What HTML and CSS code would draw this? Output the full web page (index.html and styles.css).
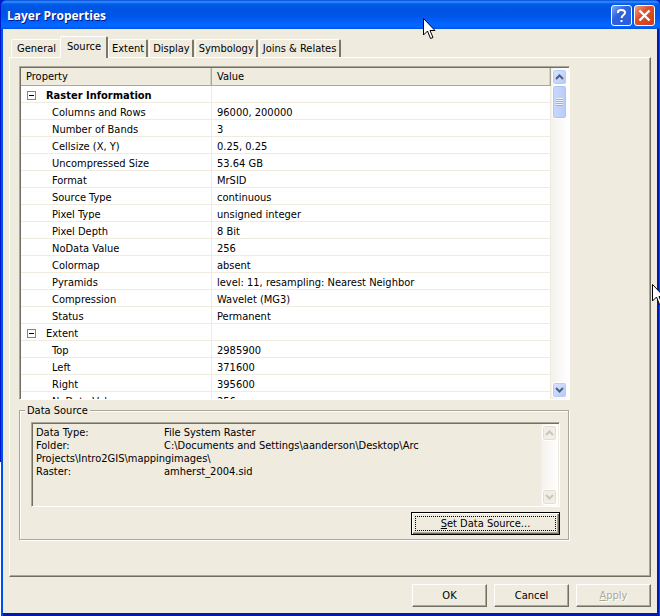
FILE: index.html
```html
<!DOCTYPE html>
<html lang="en">
<head>
    <meta charset="UTF-8">
    <meta name="viewport" content="width=device-width, initial-scale=1.0">
    <title>Layer Properties</title>
    <link rel="stylesheet" href="styles.css">
</head>
<body>
    <div class="window">
        <header class="titlebar">
            <h1>Layer Properties</h1>
            <button type="button" class="title-btn help" aria-label="Help">
                <svg width="13" height="15" viewBox="0 0 13 15"><path d="M3 5V4Q3 2 6.500 2T10 4.500Q10 6 8.500 7T6.500 10M6.500 12V14" fill="none" stroke="#fff" stroke-width="2"/></svg>
            </button>
            <button type="button" class="title-btn close" aria-label="Close">
                <svg width="13" height="13" viewBox="0 0 13 13"><path d="M1.500 1.500L11.500 11.500M11.500 1.500L1.500 11.500" stroke="#fff" stroke-width="2.400"/></svg>
            </button>
        </header>
        <main class="content">
            <div class="tabs" role="tablist">
                <button type="button" class="tab" role="tab">General</button>
                <button type="button" class="tab active" role="tab" aria-selected="true">Source</button>
                <button type="button" class="tab" role="tab">Extent</button>
                <button type="button" class="tab" role="tab">Display</button>
                <button type="button" class="tab" role="tab">Symbology</button>
                <button type="button" class="tab" role="tab">Joins &amp; Relates</button>
            </div>
            <div class="panel">
                <div class="list sunken">
                    <div class="list-view">
                        <table class="props">
                            <thead>
                                <tr><th class="name">Property</th><th>Value</th></tr>
                            </thead>
                            <tbody>
                                <tr class="group main"><td><button type="button" class="toggle" aria-label="Collapse Raster Information"></button>Raster Information</td><td></td></tr>
                                <tr><td>Columns and Rows</td><td>96000, 200000</td></tr>
                                <tr><td>Number of Bands</td><td>3</td></tr>
                                <tr><td>Cellsize (X, Y)</td><td>0.25, 0.25</td></tr>
                                <tr><td>Uncompressed Size</td><td>53.64 GB</td></tr>
                                <tr><td>Format</td><td>MrSID</td></tr>
                                <tr><td>Source Type</td><td>continuous</td></tr>
                                <tr><td>Pixel Type</td><td>unsigned integer</td></tr>
                                <tr><td>Pixel Depth</td><td>8 Bit</td></tr>
                                <tr><td>NoData Value</td><td>256</td></tr>
                                <tr><td>Colormap</td><td>absent</td></tr>
                                <tr><td>Pyramids</td><td>level: 11, resampling: Nearest Neighbor</td></tr>
                                <tr><td>Compression</td><td>Wavelet (MG3)</td></tr>
                                <tr><td>Status</td><td>Permanent</td></tr>
                                <tr class="group"><td><button type="button" class="toggle" aria-label="Collapse Extent"></button>Extent</td><td></td></tr>
                                <tr><td>Top</td><td>2985900</td></tr>
                                <tr><td>Left</td><td>371600</td></tr>
                                <tr><td>Right</td><td>395600</td></tr>
                                <tr><td>NoData Value</td><td>256</td></tr>
                            </tbody>
                        </table>
                    </div>
                    <div class="scrollbar">
                        <button type="button" class="scroll-btn" aria-label="Scroll up"><svg width="9" height="6" viewBox="0 0 9 6"><path d="M1 5L4.500 1.500L8 5"/></svg></button>
                        <div class="thumb"><span></span></div>
                        <button type="button" class="scroll-btn down" aria-label="Scroll down"><svg width="9" height="6" viewBox="0 0 9 6"><path d="M1 1L4.500 4.500L8 1"/></svg></button>
                    </div>
                </div>
                <fieldset class="source">
                    <legend><label for="sourceInfo">Data Source</label></legend>
                    <div class="source-box sunken">
                        <textarea id="sourceInfo" readonly>Data Type:&#9;File System Raster
Folder:&#9;C:\Documents and Settings\aanderson\Desktop\Arc
Projects\Intro2GIS\mappingimages\
Raster:&#9;amherst_2004.sid</textarea>
                        <div class="scrollbar off">
                            <button type="button" class="scroll-btn" disabled aria-label="Scroll up"><svg width="9" height="6" viewBox="0 0 9 6"><path d="M1 5L4.500 1.500L8 5"/></svg></button>
                            <button type="button" class="scroll-btn down" disabled aria-label="Scroll down"><svg width="9" height="6" viewBox="0 0 9 6"><path d="M1 1L4.500 4.500L8 1"/></svg></button>
                        </div>
                    </div>
                    <button type="button" class="btn default"><span><u>S</u>et Data Source...</span></button>
                </fieldset>
            </div>
            <div class="buttons">
                <button type="button" class="btn">OK</button>
                <button type="button" class="btn">Cancel</button>
                <button type="button" class="btn" disabled><u>A</u>pply</button>
            </div>
        </main>
    </div>

    <!-- mouse pointers -->
    <svg class="cursor one" width="13" height="22" viewBox="0 0 13 22"><path d="M.5 .5V17L4.500 13L7.500 20.500L10 19.500L7 12.500H12Z" fill="#fff" stroke="#000"/></svg>
    <svg class="cursor two" width="13" height="22" viewBox="0 0 13 22"><path d="M.5 .5V17L4.500 13L7.500 20.500L10 19.500L7 12.500H12Z" fill="#fff" stroke="#000"/></svg>
</body>
</html>
```
FILE: styles.css
```css
*{
    box-sizing: border-box;
}
body{
    margin: 0;
    padding-left: 1px;
    background: linear-gradient(#0019cf 75%, #fff 75%);
    font-family: "DejaVu Sans Condensed", Tahoma, sans-serif;
    font-size: 11px;
    line-height: 13px;
    color: #000;
    position: relative;
    overflow: hidden;
}
button, textarea{
    font: inherit;
    color: inherit;
    margin: 0;
    padding: 0;
}
.window{
    display: flex;
    flex-direction: column;
    height: 100vh;
    background-color: #0050e6;
    border-radius: 6px 6px 0 0;
    overflow: hidden;
}

/* title bar */
.titlebar{
    display: flex;
    align-items: center;
    gap: 2px;
    height: 29px;
    padding: 2px 5px 0 6px;
    background: linear-gradient(#0048d0 0, #3d95ff 2px, #0a6cf5 3px, #0058e6 5px, #0054e3 10px, #0055ea 16px, #0066ff 24px, #0066ff 27px, #0050dc 29px);
}
.titlebar h1{
    flex: 1;
    margin: 0;
    font-family: "Open Sans", "Trebuchet MS", sans-serif;
    font-size: 12px;
    font-weight: bold;
    color: #fff;
    text-shadow: 1px 1px 0 #0a1883;
}
.title-btn{
    display: flex;
    align-items: center;
    justify-content: center;
    width: 21px;
    height: 21px;
    border: 1px solid #fff;
    border-radius: 3px;
}
.help{
    background: linear-gradient(135deg, #7fa6f5, #2f62dc 40%, #2a5be0);
}
.close{
    background: linear-gradient(135deg, #f0a088, #e0502a 40%, #cc3d14);
}

/* dialog body */
.content{
    flex: 1;
    min-height: 0;
    display: flex;
    flex-direction: column;
    margin: 0 3px 0 2px;
    padding: 7px 6px 6px;
    background-color: #efebde;
    border-bottom: 3px solid #0019b0;
    box-shadow: 2px 0 0 #0019b0;
}
.tabs{
    display: flex;
    align-items: flex-end;
    height: 21px;
    padding-left: 2px;
    position: relative;
    z-index: 1;
}
.tab{
    height: 18px;
    padding: 0 2px 0 3px;
    margin-right: 1px;
    background-color: #efebde;
    border: 1px solid #fff;
    border-right: 2px solid #7b7869;
    border-bottom: 0;
    border-radius: 2px 2px 0 0;
    white-space: nowrap;
}
.tab:first-child{
    padding: 0 4px 0 5px;
    border-right: 0;
    margin-right: 0;
}
.tab:last-child{
    padding: 0 3px;
}
.tab.active{
    height: 22px;
    padding: 0 5px 3px 6px;
    margin-right: 0;
    margin-bottom: -1px;
}
.panel{
    flex: 1;
    min-height: 0;
    display: flex;
    flex-direction: column;
    padding: 8px 80px 35px 9px;
    border: 1px solid #fff;
    border-right-color: #716f64;
    border-bottom-color: #716f64;
    box-shadow: inset -1px -1px 0 #aca899;
}
.sunken{
    padding: 1px 1px 0;
    border: 1px solid #fff;
    border-top-color: #aca899;
    border-left-color: #aca899;
    box-shadow: inset 1px 1px 0 #716f64;
}

/* property list */
.list{
    flex: 1;
    min-height: 0;
    display: flex;
    background-color: #fff;
}
.list-view{
    flex: 1;
    overflow: hidden;
}
.props{
    width: 100%;
    table-layout: fixed;
    border-collapse: separate;
    border-spacing: 0;
    text-align: left;
}
.props th{
    height: 18px;
    padding: 0 5px;
    font-weight: normal;
    background-color: #efebde;
    border-right: 1px solid #aca899;
    border-bottom: 1px solid #aca899;
    box-shadow: inset -1px 0 0 #d6d2c2;
}
.props .name{
    width: 191px;
}
.props td{
    height: 17px;
    padding: 2px 5px 0;
    border-right: 1px solid #efebde;
    border-bottom: 1px solid #efebde;
    white-space: nowrap;
}
.props td:first-child{
    padding-left: 31px;
}
.props .group td:first-child{
    padding-left: 6px;
}
.props .main td{
    font-weight: bold;
}
.toggle{
    width: 9px;
    height: 9px;
    margin-right: 10px;
    border: 1px solid #848484;
    background: linear-gradient(#000, #000) center / 5px 1px no-repeat #fff;
}

/* scroll bars */
.scrollbar{
    display: flex;
    flex-direction: column;
    width: 17px;
    padding: 1px 0;
    background-image: linear-gradient(to right, #f3f1ec, #fff);
}
.scroll-btn{
    display: flex;
    align-items: center;
    justify-content: center;
    height: 16px;
    margin: 0 1px;
    border: 1px solid #fff;
    border-radius: 3px;
    background: linear-gradient(135deg, #dbe5fe, #b4c8f8);
    box-shadow: inset 0 0 0 1px #b8cbf6;
}
.scroll-btn.down{
    margin-top: auto;
}
.scroll-btn path{
    fill: none;
    stroke: #4d6185;
    stroke-width: 2;
}
.thumb{
    display: flex;
    align-items: center;
    justify-content: center;
    height: 34px;
    margin: 0 1px;
    border: 1px solid #fff;
    border-radius: 3px;
    background: linear-gradient(to right, #c9d8fc, #b9cbf9);
    box-shadow: inset 0 0 0 1px #b0c4f2;
}
.thumb span{
    width: 7px;
    height: 8px;
    background: repeating-linear-gradient(#eef4fe 0 1px, #8cb0f8 1px 2px);
}
.off .scroll-btn{
    background: #f0eee6;
    box-shadow: inset 0 0 0 1px #e2dfd0;
}
.off path{
    stroke: #c9c7ba;
}

/* data source */
.source{
    display: flex;
    flex-direction: column;
    min-width: 0;
    margin: 4px 1px 1px 0;
    padding: 5px 8px 4px 11px;
    border: 1px solid #aca899;
    box-shadow: 1px 1px 0 #fff, inset 1px 1px 0 #fff;
}
.source legend{
    padding: 0 2px;
    margin-left: -6px;
    background-color: #efebde;
}
.source-box{
    display: flex;
    height: 85px;
}
.source-box textarea{
    flex: 1;
    padding: 2px 3px;
    border: 0;
    outline: 0;
    resize: none;
    overflow: hidden;
    white-space: pre;
    tab-size: 128px;
    background-color: transparent;
}

/* push buttons */
.btn{
    width: 75px;
    height: 23px;
    background-color: #efebde;
    border: 1px solid #fff;
    border-right-color: #716f64;
    border-bottom-color: #716f64;
    box-shadow: inset -1px -1px 0 #aca899;
}
.btn:disabled{
    color: #aca899;
    text-shadow: 1px 1px 0 #fff;
}
.btn.default{
    display: flex;
    align-self: flex-end;
    width: 149px;
    margin-top: 5px;
    padding: 3px;
    border-color: #000;
    box-shadow: inset 1px 1px 0 #fff, inset -1px -1px 0 #716f64, inset -2px -2px 0 #aca899;
}
.btn.default span{
    flex: 1;
    border: 1px dotted #000;
}
.buttons{
    display: flex;
    justify-content: flex-end;
    gap: 7px;
    padding-top: 7px;
}

/* pointers float above the window */
.cursor{
    position: absolute;
}
.one{
    left: 423px;
    top: 18px;
}
.two{
    left: 652px;
    top: 284px;
}
```
